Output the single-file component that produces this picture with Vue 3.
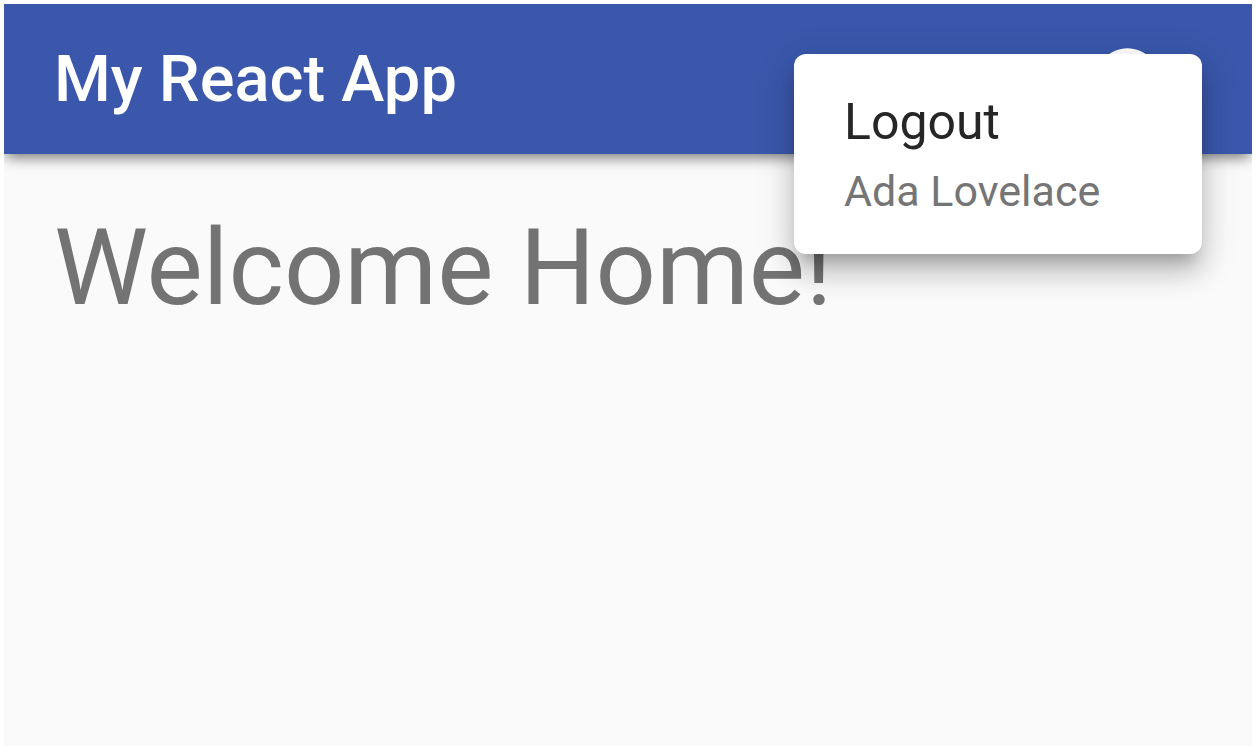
<script setup>
import { ref } from 'vue'

const title = 'My React App'
const user = ref('Ada Lovelace')
const menuOpen = ref(true)

function logout() {
  menuOpen.value = false
}
</script>

<template>
  <div class="page">
    <header class="app-bar">
      <h1 class="title">{{ title }}</h1>
      <div class="account">
        <button class="avatar" type="button" aria-label="Account" @click="menuOpen = !menuOpen">
          <svg viewBox="0 0 24 24" aria-hidden="true">
            <path d="M12 2C6.48 2 2 6.48 2 12s4.48 10 10 10 10-4.48 10-10S17.52 2 12 2zm0 3c1.66 0 3 1.34 3 3s-1.34 3-3 3-3-1.34-3-3 1.34-3 3-3zm0 14.2c-2.5 0-4.71-1.28-6-3.22.03-1.99 4-3.08 6-3.08 1.99 0 5.97 1.09 6 3.08-1.29 1.94-3.5 3.22-6 3.22z" />
          </svg>
        </button>
        <div v-if="menuOpen" class="menu">
          <button class="item" type="button" @click="logout">
            <span class="primary">Logout</span>
            <span class="secondary">{{ user }}</span>
          </button>
        </div>
      </div>
    </header>
    <main class="content">
      <h2 class="welcome">Welcome Home!</h2>
    </main>
  </div>
</template>

<style>
body {
  background: #ffffff;
}
</style>

<style scoped>
.page {
  box-sizing: border-box;
  min-height: 100vh;
  padding: 4px 4px 6px;
  display: flex;
  flex-direction: column;
  font-family: Roboto, "Liberation Sans", sans-serif;
}
.app-bar {
  position: relative;
  z-index: 1;
  display: flex;
  align-items: center;
  justify-content: space-between;
  height: 150px;
  box-sizing: border-box;
  padding: 0 50px;
  background: #3a57ab;
  color: #ffffff;
  box-shadow: 0 6px 12px -3px rgba(0, 0, 0, 0.4), 0 3px 16px rgba(0, 0, 0, 0.2);
  clip-path: inset(0 0 -240px 0);
}
.title {
  margin: 0;
  font-size: 65px;
  line-height: 80px;
  font-weight: 500;
}
.account {
  position: relative;
  display: flex;
  width: 408px;
  justify-content: flex-end;
}
.avatar {
  display: flex;
  margin-right: 37px;
  padding: 0;
  border: 0;
  background: none;
  color: inherit;
}
.avatar svg {
  width: 75px;
  height: 75px;
  fill: currentColor;
}
.menu {
  position: absolute;
  top: 12px;
  left: 0;
  right: 0;
  border-radius: 12px;
  background: #ffffff;
  box-shadow: 0 15px 15px -9px rgba(0, 0, 0, 0.2), 0 20px 26px 0 rgba(0, 0, 0, 0.14), 0 9px 36px 5px rgba(0, 0, 0, 0.12);
}
.item {
  display: flex;
  flex-direction: column;
  width: 100%;
  padding: 31px 50px;
  border: 0;
  background: none;
  font-family: inherit;
  text-align: left;
}
.primary {
  font-size: 50px;
  line-height: 74px;
  color: #262626;
}
.secondary {
  font-size: 43px;
  line-height: 64px;
  color: #757575;
}
.content {
  flex: 1;
  padding: 52px 50px;
  background: #fafafa;
}
.welcome {
  margin: 0;
  font-size: 106px;
  line-height: 124px;
  font-weight: 400;
  color: #737373;
}
</style>
